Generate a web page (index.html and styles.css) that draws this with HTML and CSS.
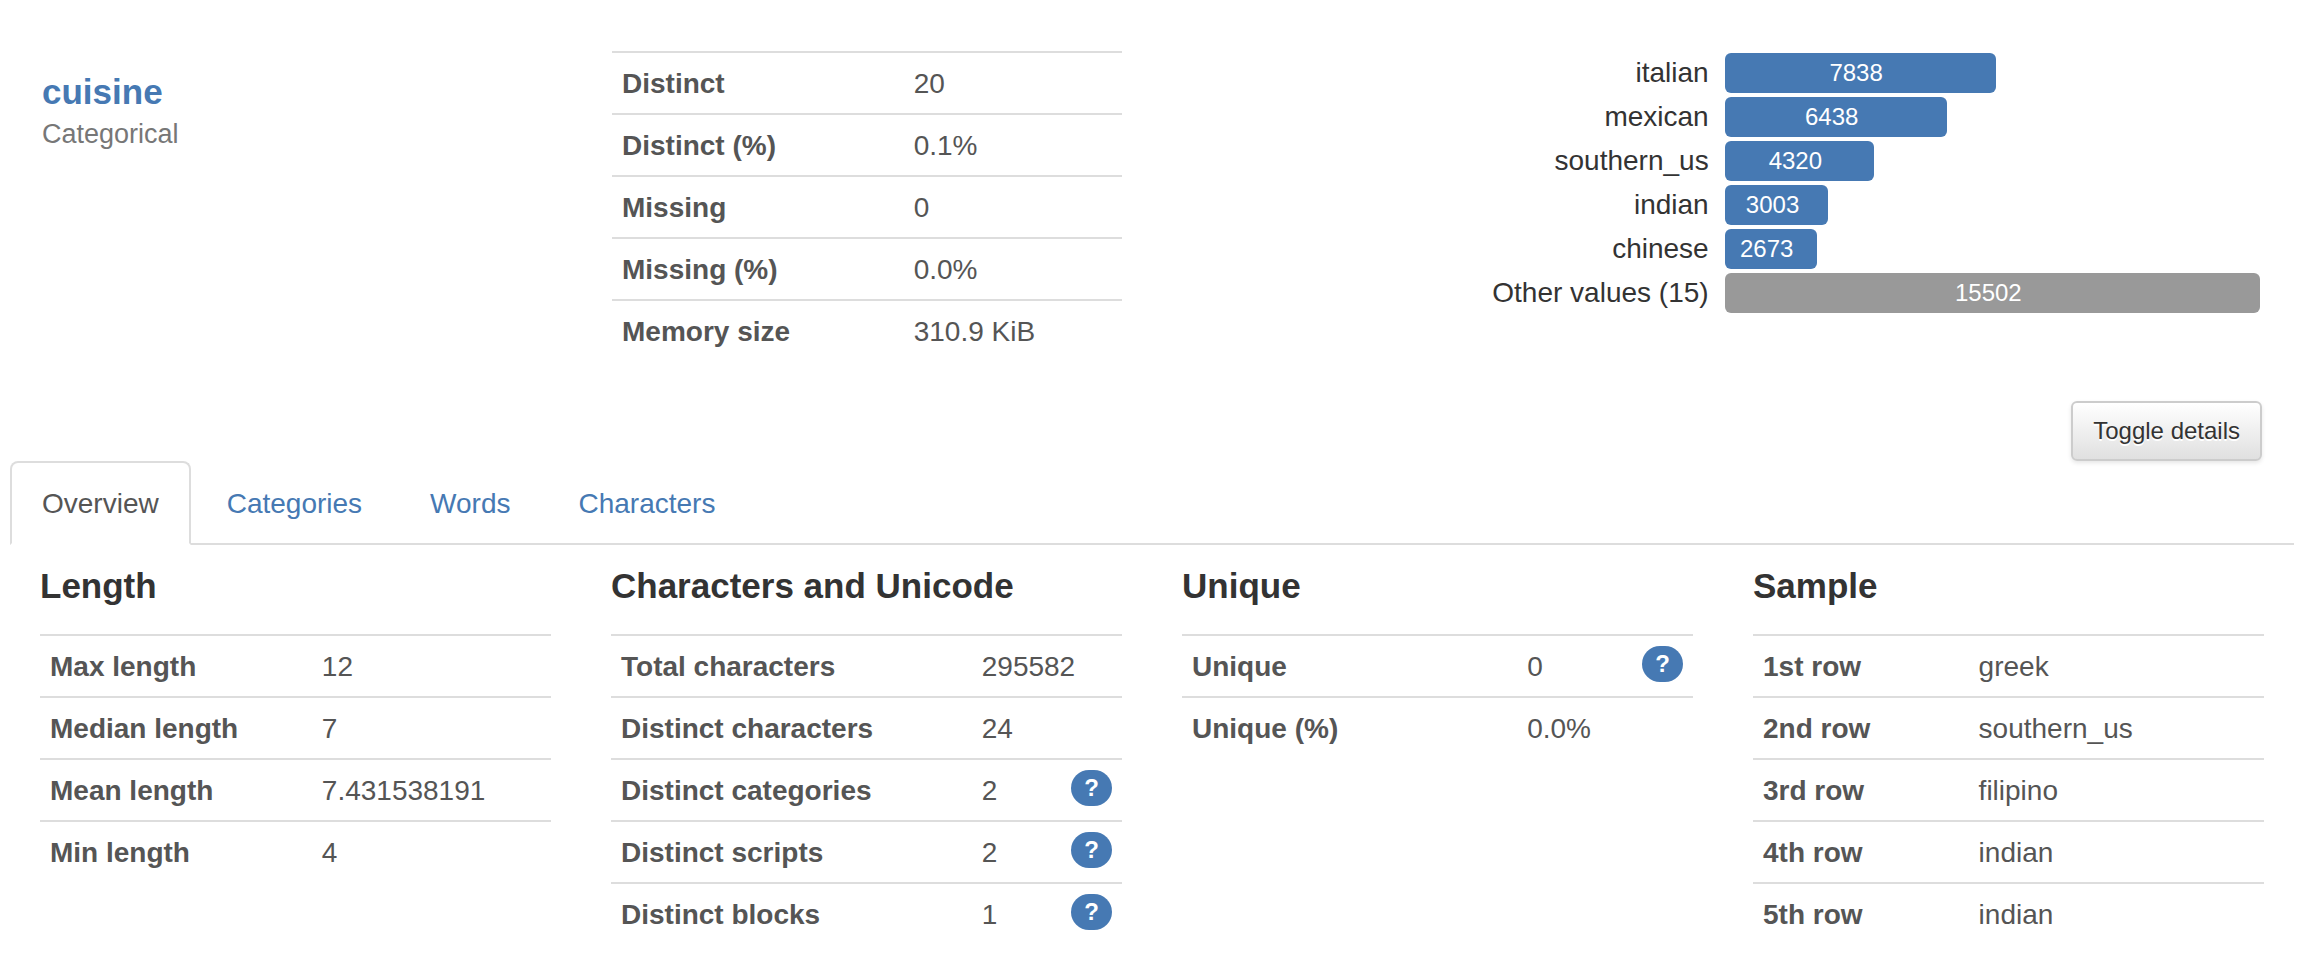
FILE: index.html
```html
<!DOCTYPE html>
<html lang="en">
<head>
<meta charset="utf-8">
<meta name="viewport" content="width=device-width, initial-scale=1">
<title>cuisine</title>
<link rel="stylesheet" href="styles.css">
</head>
<body>
<main class="variable">
  <section class="summary">
    <header class="variable-header">
      <h2 class="variable-name"><a href="#cuisine">cuisine</a></h2>
      <p class="variable-type">Categorical</p>
    </header>
    <table class="stats stats-summary">
      <tbody>
        <tr><th scope="row">Distinct</th><td>20</td></tr>
        <tr><th scope="row">Distinct (%)</th><td>0.1%</td></tr>
        <tr><th scope="row">Missing</th><td>0</td></tr>
        <tr><th scope="row">Missing (%)</th><td>0.0%</td></tr>
        <tr><th scope="row">Memory size</th><td>310.9 KiB</td></tr>
      </tbody>
    </table>
    <ul class="freq">
      <li class="freq-row"><span class="freq-label">italian</span><div class="freq-track"><div class="bar" style="width:50.6%">7838</div></div></li>
      <li class="freq-row"><span class="freq-label">mexican</span><div class="freq-track"><div class="bar" style="width:41.5%">6438</div></div></li>
      <li class="freq-row"><span class="freq-label">southern_us</span><div class="freq-track"><div class="bar" style="width:27.9%">4320</div></div></li>
      <li class="freq-row"><span class="freq-label">indian</span><div class="freq-track"><div class="bar" style="width:19.4%">3003</div></div></li>
      <li class="freq-row"><span class="freq-label">chinese</span><div class="freq-track"><div class="bar" style="width:17.2%">2673</div></div></li>
      <li class="freq-row"><span class="freq-label">Other values (15)</span><div class="freq-track"><div class="bar bar-other" style="width:100%">15502</div></div></li>
    </ul>
  </section>

  <div class="actions">
    <button class="toggle" type="button">Toggle details</button>
  </div>

  <section class="details">
    <nav>
      <ul class="tabs">
        <li><a class="tab tab-active" href="#overview" aria-current="true">Overview</a></li>
        <li><a class="tab" href="#categories">Categories</a></li>
        <li><a class="tab" href="#words">Words</a></li>
        <li><a class="tab" href="#characters">Characters</a></li>
      </ul>
    </nav>
    <div class="panels" id="overview">
      <section class="panel">
        <h4 class="panel-title">Length</h4>
        <table class="stats stats-length">
          <tbody>
            <tr><th scope="row">Max length</th><td>12</td></tr>
            <tr><th scope="row">Median length</th><td>7</td></tr>
            <tr><th scope="row">Mean length</th><td>7.431538191</td></tr>
            <tr><th scope="row">Min length</th><td>4</td></tr>
          </tbody>
        </table>
      </section>
      <section class="panel">
        <h4 class="panel-title">Characters and Unicode</h4>
        <table class="stats stats-unicode">
          <tbody>
            <tr><th scope="row">Total characters</th><td colspan="2">295582</td></tr>
            <tr><th scope="row">Distinct characters</th><td colspan="2">24</td></tr>
            <tr><th scope="row">Distinct categories</th><td>2</td><td class="help"><span class="badge">?</span></td></tr>
            <tr><th scope="row">Distinct scripts</th><td>2</td><td class="help"><span class="badge">?</span></td></tr>
            <tr><th scope="row">Distinct blocks</th><td>1</td><td class="help"><span class="badge">?</span></td></tr>
          </tbody>
        </table>
      </section>
      <section class="panel">
        <h4 class="panel-title">Unique</h4>
        <table class="stats stats-unique">
          <tbody>
            <tr><th scope="row">Unique</th><td>0</td><td class="help"><span class="badge">?</span></td></tr>
            <tr><th scope="row">Unique (%)</th><td colspan="2">0.0%</td></tr>
          </tbody>
        </table>
      </section>
      <section class="panel">
        <h4 class="panel-title">Sample</h4>
        <table class="stats stats-sample">
          <tbody>
            <tr><th scope="row">1st row</th><td>greek</td></tr>
            <tr><th scope="row">2nd row</th><td>southern_us</td></tr>
            <tr><th scope="row">3rd row</th><td>filipino</td></tr>
            <tr><th scope="row">4th row</th><td>indian</td></tr>
            <tr><th scope="row">5th row</th><td>indian</td></tr>
          </tbody>
        </table>
      </section>
    </div>
  </section>
</main>
</body>
</html>
```

FILE: styles.css
```css
:root {
  --primary: #4679b3;
  --line: #ddd;
  --text: #333;
  --cell: #555;
}

* {
  box-sizing: border-box;
}

body {
  margin: 0;
  background: #fff;
  color: var(--text);
  font-family: "Helvetica Neue", "Liberation Sans", Arial, sans-serif;
  font-size: 28px;
  line-height: 40px;
}

a {
  color: var(--primary);
  text-decoration: none;
}

.variable {
  padding: 51px 20px 0 10px;
}

.summary {
  display: grid;
  grid-template-columns: minmax(0, 1fr) minmax(0, 1fr) minmax(0, 2fr);
  align-items: start;
  margin: 0 2px;
}

.summary > * {
  margin: 0 30px;
}

.variable-header {
  padding-top: 21px;
}

.variable-name,
.panel-title {
  font-size: 35px;
  font-weight: 700;
  line-height: 40px;
}

.variable-name {
  margin: 0 0 2px;
}

.variable-type {
  margin: 0;
  color: #777;
  font-size: 27px;
}

.stats {
  table-layout: fixed;
  border-spacing: 0;
  color: var(--cell);
}

.panel .stats {
  width: 100%;
}

.stats th,
.stats td {
  padding: 11px 10px 9px;
  border-top: 2px solid var(--line);
  text-align: left;
  vertical-align: top;
  white-space: nowrap;
}

.stats td {
  padding-left: 11px;
}

.stats-summary th { width: 57%; }
.stats-length th { width: 53%; }
.stats-unicode th { width: 70.4%; }
.stats-unique th { width: 65.4%; }
.stats-sample th { width: 42%; }

.stats td.help {
  padding: 10px 10px 0;
  text-align: right;
}

.badge {
  display: block;
  width: max-content;
  margin-left: auto;
  padding: 6px 13px;
  border-radius: 20px;
  background: var(--primary);
  color: #fff;
  font-size: 24px;
  font-weight: 700;
  line-height: 24px;
}

.freq {
  display: grid;
  gap: 4px;
  padding: 2px 2px 0;
  list-style: none;
}

.freq-row {
  display: grid;
  grid-template-columns: minmax(0, 49fr) minmax(0, 50fr);
  gap: 16px;
}

.freq-label {
  text-align: right;
  white-space: nowrap;
}

.bar {
  padding-right: 8px;
  border-radius: 6px;
  background: var(--primary);
  color: #fff;
  font-size: 24px;
  text-align: center;
}

.bar-other {
  background: #999;
}

.actions {
  display: flex;
  justify-content: flex-end;
  padding: 40px 32px 0;
}

.toggle {
  padding: 8px 20px;
  border: 2px solid #ccc;
  border-radius: 6px;
  background: linear-gradient(#fff, #e0e0e0);
  box-shadow: 0 2px 4px rgba(0, 0, 0, 0.1);
  color: var(--text);
  font-family: inherit;
  font-size: 24px;
  line-height: 40px;
  text-shadow: 0 2px 0 #fff;
  cursor: pointer;
}

.tabs {
  display: flex;
  gap: 4px;
  margin: 0;
  padding: 0;
  border-bottom: 2px solid var(--line);
  list-style: none;
}

.tab {
  display: block;
  margin-bottom: -2px;
  padding: 21px 30px 19px;
  border: 2px solid transparent;
  border-radius: 8px 8px 0 0;
}

.tab-active {
  border-color: var(--line) var(--line) #fff;
  background: #fff;
  color: var(--cell);
}

.panels {
  display: grid;
  grid-template-columns: repeat(4, minmax(0, 1fr));
}

.panel {
  padding: 0 30px;
}

.panel-title {
  margin: 21px 0 28px;
  white-space: nowrap;
}
```
